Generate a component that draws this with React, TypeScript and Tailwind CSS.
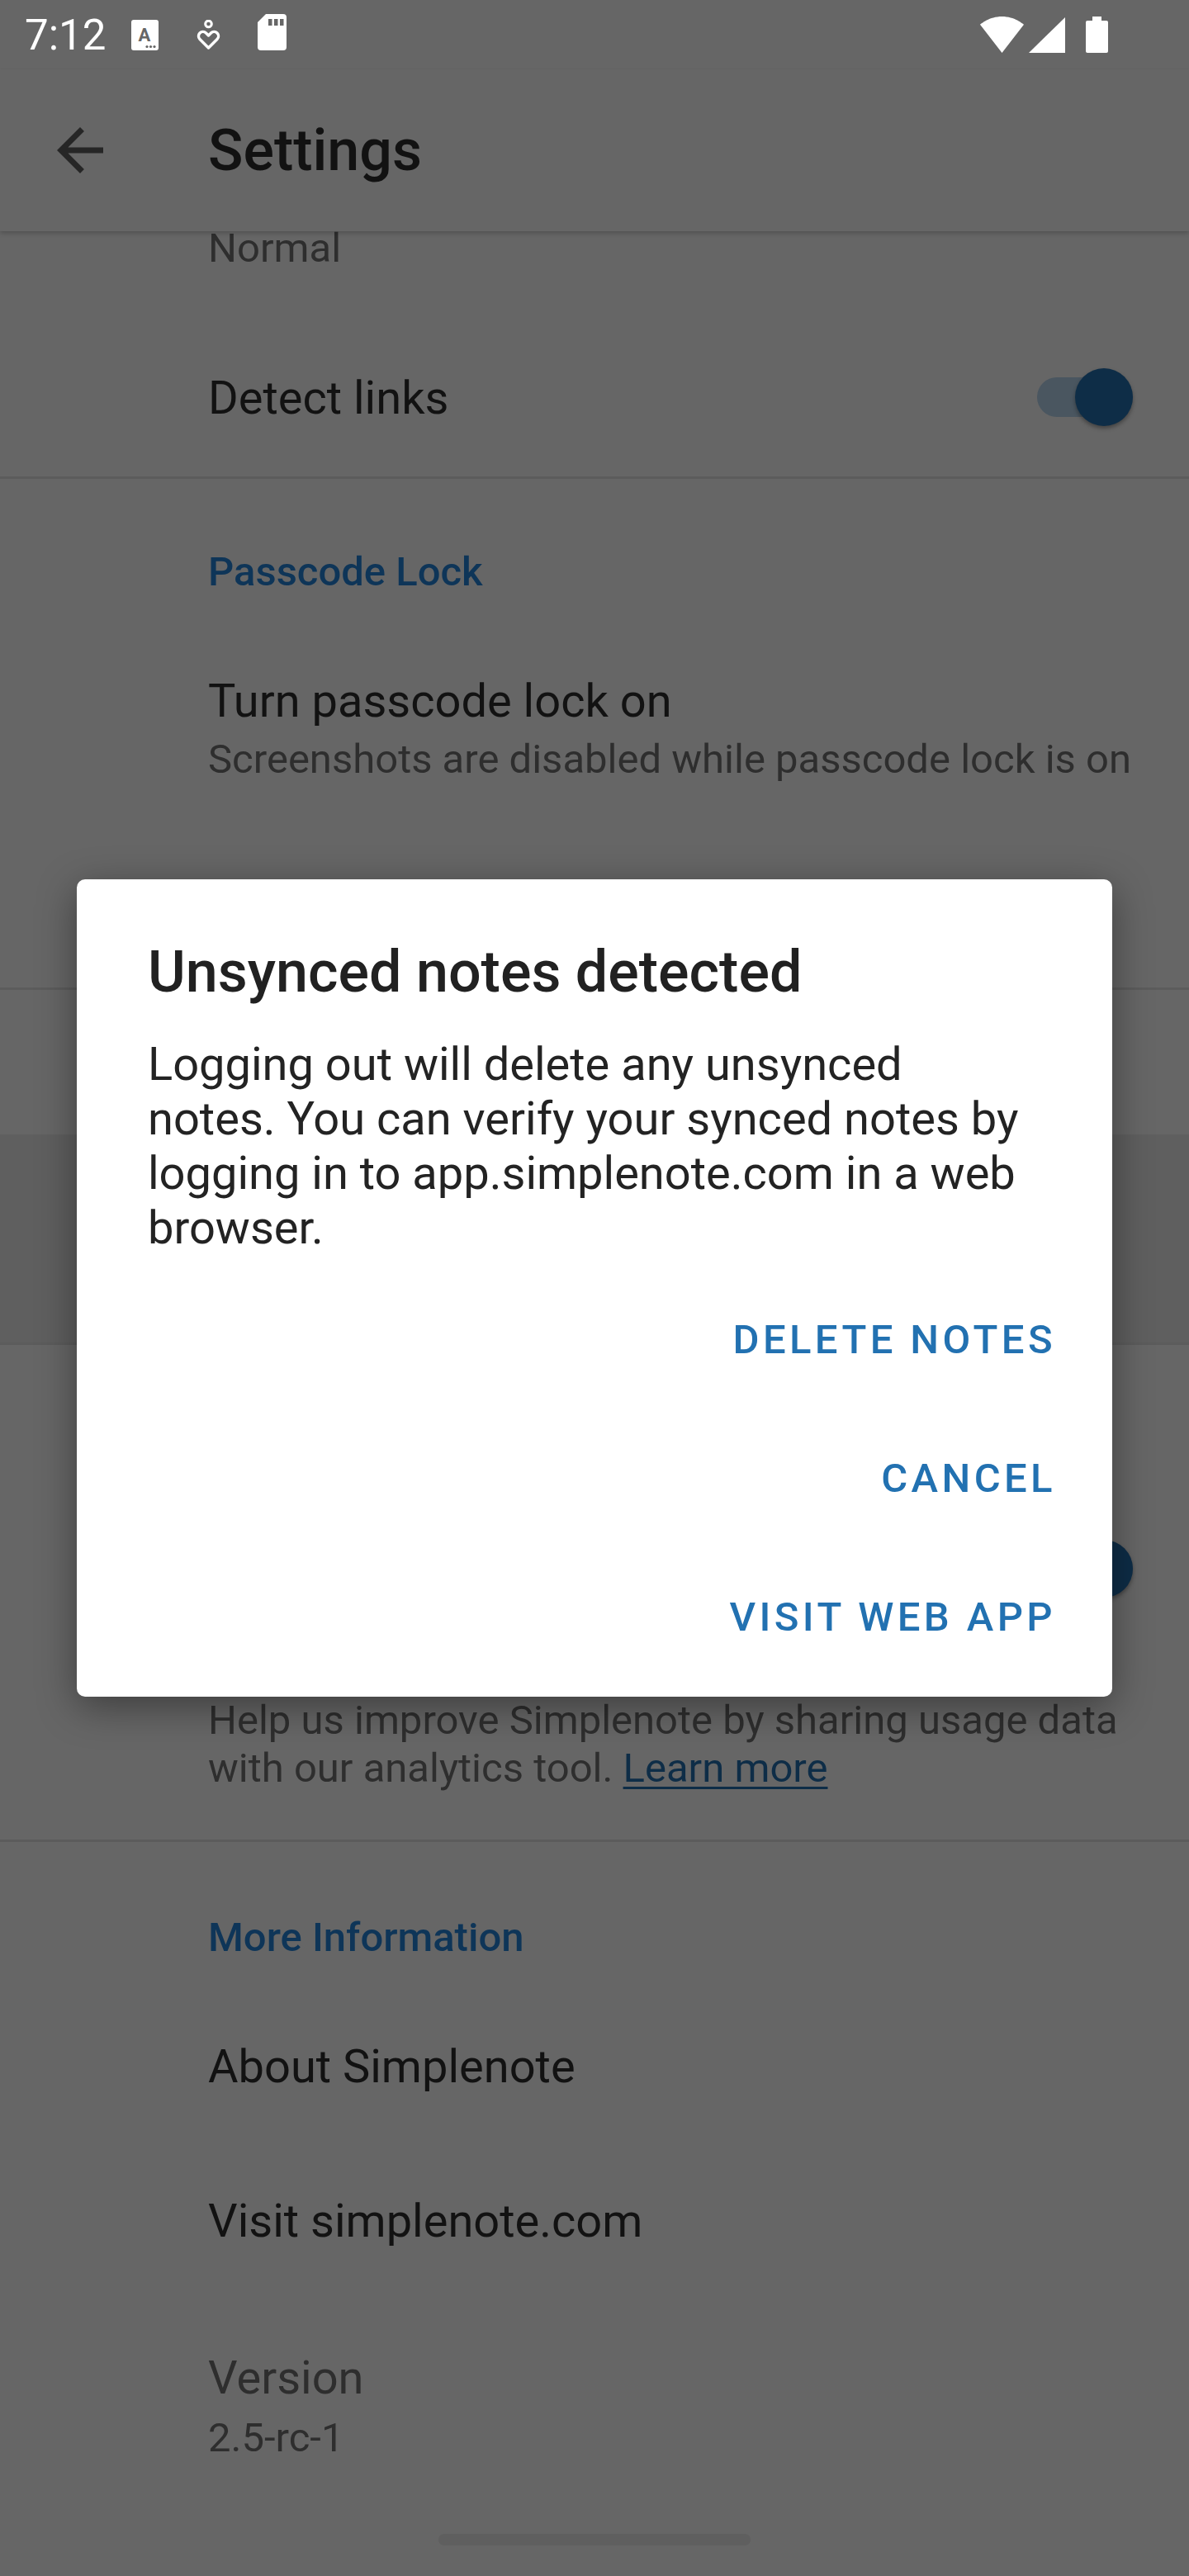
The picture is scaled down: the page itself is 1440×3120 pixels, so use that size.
import React from 'react';

const BLUE = 'text-[#0e3558]';

const StatusBar = () => (
  <div className="flex h-[84px] items-center justify-between pl-[30px] pr-[98px] text-white">
    <div className="flex items-center">
      <span className="text-[51px] leading-[57px]">7:12</span>
      <svg width="33" height="37" viewBox="0 0 33 37" className="ml-[31px]">
        <rect x="0" y="0" width="33" height="37" rx="3" fill="#ffffff" />
        <text x="16" y="26" fontSize="22" fontWeight="700" fill="#666666" textAnchor="middle" fontFamily="Roboto, sans-serif">
          A
        </text>
        <circle cx="19" cy="32.5" r="1.6" fill="#666666" />
        <circle cx="23.5" cy="32.5" r="1.6" fill="#666666" />
        <circle cx="28" cy="32.5" r="1.6" fill="#666666" />
      </svg>
      <svg width="29" height="36" viewBox="0 0 29 36" className="ml-[46px]">
        <circle cx="14.5" cy="5" r="3.8" fill="none" stroke="#ffffff" strokeWidth="3" />
        <path
          d="M14.5 34 L4 23.5 a5.3 5.3 0 0 1 7.5 -7.5 L14.5 19 l3 -3 a5.3 5.3 0 0 1 7.5 7.5 Z"
          fill="none"
          stroke="#ffffff"
          strokeWidth="3.4"
          strokeLinejoin="round"
        />
      </svg>
      <svg width="35" height="44" viewBox="0 0 35 44" className="ml-[45px] -mt-[6px]">
        <path d="M10 0 H31 a4 4 0 0 1 4 4 V40 a4 4 0 0 1 -4 4 H4 a4 4 0 0 1 -4 -4 V10 Z" fill="#ffffff" />
        <rect x="13" y="6" width="4.5" height="8" fill="#666666" />
        <rect x="20" y="6" width="4.5" height="8" fill="#666666" />
        <rect x="27" y="6" width="4.5" height="8" fill="#666666" />
      </svg>
    </div>
    <div className="flex items-end">
      <svg width="53" height="44" viewBox="0.4 3 23.2 18" preserveAspectRatio="none">
        <path d="M12,21L23.6,7C23.15,6.66 18.67,3 12,3C5.32,3 0.85,6.66 0.4,7L12,21Z" fill="#ffffff" />
      </svg>
      <svg width="44" height="43" viewBox="0 0 44 43" className="ml-[6px]">
        <polygon points="44,0 44,43 0,43" fill="#ffffff" />
      </svg>
      <svg width="27" height="44" viewBox="0 0 27 44" className="ml-[25px]">
        <rect x="8" y="0" width="11" height="6" fill="#ffffff" />
        <rect x="0" y="5" width="27" height="39" rx="2" fill="#ffffff" />
      </svg>
    </div>
  </div>
);

const Toolbar = () => (
  <div className="relative z-10 flex h-[196px] items-center bg-[#666666] shadow-[0_3px_5px_rgba(0,0,0,0.18)]">
    <svg width="84" height="84" viewBox="0 0 24 24" className="ml-[55px]">
      <path d="M20 11H7.83l5.59-5.59L12 4l-8 8 8 8 1.41-1.41L7.83 13H20v-2z" fill="#262626" />
    </svg>
    <span className="ml-[113px] text-[70px] font-medium leading-[82px] text-[#121212]">Settings</span>
  </div>
);

const Switch = () => (
  <div className="relative h-[70px] w-[119px]">
    <div className="absolute left-0 top-[11px] h-[48px] w-[116px] rounded-full bg-[#4a5660]" />
    <div className="absolute right-[3px] top-0 h-[70px] w-[70px] rounded-full bg-[#0e2d47] shadow-[0_3px_5px_rgba(0,0,0,0.35)]" />
  </div>
);

const Divider = () => <div className="h-[3px] bg-[#5c5c5c]" />;

const Dialog = () => (
  <div className="absolute inset-0 z-20 flex items-center justify-center">
    <div className="w-[1254px] rounded-[10px] bg-white shadow-[0_12px_48px_rgba(0,0,0,0.4)]">
      <div className="px-[86px] pt-[71px]">
        <h2 className="text-[70px] font-medium leading-[82px] text-[#212121]">Unsynced notes detected</h2>
        <p className="mt-[38px] text-[56px] leading-[66px] text-[#232323]">
          Logging out will delete any unsynced
          <br />
          notes. You can verify your synced notes by
          <br />
          logging in to app.simplenote.com in a web
          <br />
          browser.
        </p>
      </div>
      <div className="mt-[18px] pb-[13px]">
        {['DELETE NOTES', 'CANCEL', 'VISIT WEB APP'].map((label) => (
          <div key={label} className="flex h-[168px] items-center justify-end pr-[68px]">
            <span className="text-[49px] font-medium leading-[57px] tracking-[0.09em] text-[#2271b1]">{label}</span>
          </div>
        ))}
      </div>
    </div>
  </div>
);

export default function App() {
  return (
    <div className="relative h-[3120px] w-[1440px] overflow-hidden bg-[#666666] font-[Roboto,'Liberation_Sans',sans-serif]">
      <StatusBar />
      <Toolbar />

      <div className="relative z-0">
        {/* text size summary, scrolled partly under the toolbar */}
        <div className="-mt-[8px] h-[113px] pl-[252px]">
          <div className="text-[49px] leading-[57px] text-[#2e2e2e]">Normal</div>
        </div>

        <div className="flex h-[192px] items-center justify-between pl-[252px] pr-[65px]">
          <span className="mt-[2px] text-[56px] leading-[66px] text-[#121212]">Detect links</span>
          <Switch />
        </div>
        <Divider />

        <div className="h-[616px] pl-[252px] pt-[84px]">
          <div className={`text-[49px] font-medium leading-[57px] ${BLUE}`}>Passcode Lock</div>
          <div className="mt-[95px] text-[56px] leading-[66px] text-[#121212]">Turn passcode lock on</div>
          <div className="mt-[9px] text-[49px] leading-[57px] text-[#2e2e2e]">
            Screenshots are disabled while passcode lock is on
          </div>
        </div>
        <Divider />

        {/* account section sits behind the dialog; the pressed row shows at the edges */}
        <div className="h-[175px]" />
        <div className="h-[252px] bg-[#5f5f5f]" />
        <Divider />

        <div className="h-[599px] pl-[252px] pt-[236px]">
          <div className="flex justify-end pr-[65px]">
            <Switch />
          </div>
          <div className="mt-[120px] whitespace-nowrap text-[49px] leading-[58px] text-[#2e2e2e]">
            Help us improve Simplenote by sharing usage data
            <br />
            with our analytics tool.{' '}
            <span className="text-[#0e2d47] underline decoration-[3px] underline-offset-[6px]">Learn more</span>
          </div>
        </div>
        <Divider />

        <div className="pl-[252px] pt-[87px]">
          <div className={`text-[49px] font-medium leading-[57px] ${BLUE}`}>More Information</div>
          <div className="mt-[95px] text-[56px] leading-[66px] text-[#121212]">About Simplenote</div>
          <div className="mt-[121px] text-[56px] leading-[66px] text-[#121212]">Visit simplenote.com</div>
          <div className="mt-[124px] text-[56px] leading-[66px] text-[#2e2e2e]">Version</div>
          <div className="mt-[11px] text-[49px] leading-[57px] text-[#2e2e2e]">2.5-rc-1</div>
        </div>

        <div className="mx-auto mt-[88px] h-[14px] w-[378px] rounded-full bg-[#5f5f5f]" />
      </div>

      <Dialog />
    </div>
  );
}
